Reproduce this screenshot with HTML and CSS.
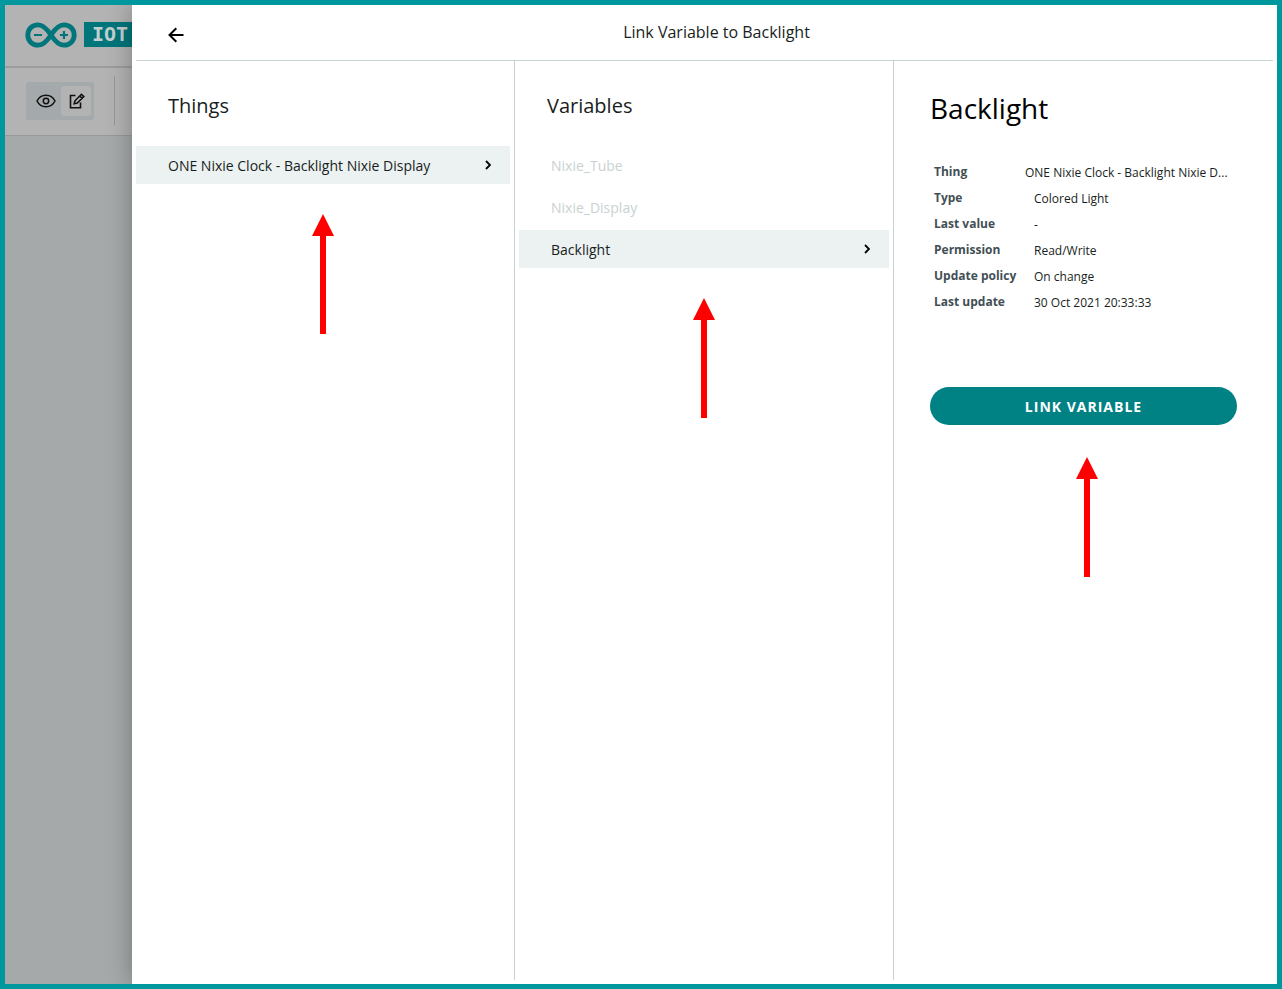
FILE: index.html
```html
<!DOCTYPE html>
<html lang="en">
<head>
<meta charset="utf-8">
<title>Link Variable to Backlight</title>
<link rel="stylesheet" href="styles.css">
</head>
<body>
<div class="frame">
  <div class="backdrop">
    <header class="topbar">
      <svg class="logo" width="52" height="26" viewBox="0 0 52 26" fill="none" stroke="#00767b" aria-hidden="true">
        <path stroke-width="4.8" d="M26 13C22.500 7.500 18.500 2.800 13 2.800C7 2.800 2.800 7.300 2.800 13S7 23.200 13 23.200C18.500 23.200 22.500 18.500 26 13C29.500 7.500 33.500 2.800 39 2.800C45 2.800 49.200 7.300 49.200 13S45 23.200 39 23.200C33.500 23.200 29.500 18.500 26 13Z"/>
        <path stroke-width="2.200" d="M9 13h8M35 13h8M39 9v8"/>
      </svg>
      <span class="product">IOT</span>
    </header>
    <div class="toolbar">
      <div class="modes">
        <button class="mode" aria-label="View">
          <svg width="20" height="14" viewBox="0 0 20 14" fill="none" stroke="#111" stroke-width="1.5"><path d="M1 7C3 3 6.200 1.200 10 1.200S17 3 19 7C17 11 13.800 12.800 10 12.800S3 11 1 7Z"/><circle cx="10" cy="7" r="2.700"/></svg>
        </button>
        <button class="mode mode-active" aria-label="Edit">
          <svg width="16" height="16" viewBox="0 0 16 16" fill="none" stroke="#111" stroke-width="1.600"><path d="M6.500 2.500H1.500V14.800H11.500V9.500"/><path d="M5.200 10.800L6 7.800L12.400 1.300L14.800 3.600L8.300 10.100ZM10.700 3L13.100 5.300"/></svg>
        </button>
      </div>
      <div class="divider"></div>
    </div>
  </div>
  <main class="panel">
    <header class="panel-head">
      <button class="back" aria-label="Back">
        <svg width="16" height="16" viewBox="0 0 16 16" fill="none" stroke="#000" stroke-width="2"><path d="M15.500 8H2M8.300 1.200L1.500 8L8.300 14.800"/></svg>
      </button>
      <h1 class="title">Link Variable to Backlight</h1>
    </header>
    <div class="columns">
      <section class="column">
        <h2 class="heading">Things</h2>
        <div class="list">
          <button class="row row-selected">ONE Nixie Clock - Backlight Nixie Display
            <svg class="chevron" width="6" height="10" viewBox="0 0 6 10" fill="none" stroke="#000" stroke-width="1.800"><path d="M1 1L5 5L1 9"/></svg>
          </button>
        </div>
        <svg class="arrow" width="22" height="120" viewBox="0 0 22 120" fill="#f00" aria-hidden="true"><path d="M11 0L22 22H14V120H8V22H0Z"/></svg>
      </section>
      <section class="column column-mid">
        <h2 class="heading">Variables</h2>
        <div class="list">
          <button class="row" disabled>Nixie_Tube</button>
          <button class="row" disabled>Nixie_Display</button>
          <button class="row row-selected">Backlight
            <svg class="chevron" width="6" height="10" viewBox="0 0 6 10" fill="none" stroke="#000" stroke-width="1.800"><path d="M1 1L5 5L1 9"/></svg>
          </button>
        </div>
        <svg class="arrow" width="22" height="120" viewBox="0 0 22 120" fill="#f00" aria-hidden="true"><path d="M11 0L22 22H14V120H8V22H0Z"/></svg>
      </section>
      <section class="column details">
        <h2 class="name">Backlight</h2>
        <dl class="facts">
          <div class="fact fact-wide"><dt>Thing</dt><dd>ONE Nixie Clock - Backlight Nixie D...</dd></div>
          <div class="fact"><dt>Type</dt><dd>Colored Light</dd></div>
          <div class="fact"><dt>Last value</dt><dd>-</dd></div>
          <div class="fact"><dt>Permission</dt><dd>Read/Write</dd></div>
          <div class="fact"><dt>Update policy</dt><dd>On change</dd></div>
          <div class="fact"><dt>Last update</dt><dd>30 Oct 2021 20:33:33</dd></div>
        </dl>
        <button class="link">LINK VARIABLE</button>
        <svg class="arrow arrow-link" width="22" height="120" viewBox="0 0 22 120" fill="#f00" aria-hidden="true"><path d="M11 0L22 22H14V120H8V22H0Z"/></svg>
      </section>
    </div>
  </main>
</div>
</body>
</html>
```
FILE: styles.css
```css
* { box-sizing: border-box; }
body { margin: 0; font-family: "Open Sans", sans-serif; color: #171e21; }
h1, h2, dl, dd { margin: 0; font-weight: 400; }
button { border: 0; padding: 0; background: none; font: inherit; color: inherit; }
svg { display: block; flex: none; }

.frame { display: flex; min-height: 100vh; border: 5px solid #00979d; background: #a5a9a9; }
.backdrop { flex: none; width: 127px; overflow: hidden; }
.topbar { display: flex; align-items: center; gap: 7px; height: 63px; padding: 0 0 2px 20px; background: #b3b3b3; border-bottom: 2px solid #9b9d9e; }
.product { flex: none; width: 80px; padding-left: 8px; background: #00767b; color: #c3cfcf; font: bold 20px/25px "DejaVu Sans Mono", monospace; }
.toolbar { display: flex; align-items: center; gap: 20px; height: 68px; padding: 0 0 2px 21px; background: #b3b3b3; border-bottom: 1px solid #979a9b; }
.modes { display: flex; flex: none; width: 68px; height: 38px; padding: 4px 3px; border-radius: 3px; background: #a4a9ab; }
.mode { display: flex; flex: 1; align-items: center; justify-content: center; border-radius: 3px; }
.mode:first-child { padding-left: 3px; }
.mode-active { padding-left: 2px; background: #b3b3b3; }
.divider { width: 1px; height: 49px; background: #95999a; }

.panel { position: relative; display: flex; flex: 1; flex-direction: column; min-width: 0; padding: 0 4px 4px; background: #fff; box-shadow: 0 0 24px rgba(0, 0, 0, .3); clip-path: inset(0 0 0 -60px); }
.panel-head { display: grid; grid-template-columns: 80px 1fr 56px; height: 56px; border-bottom: 1px solid #c9d2d2; }
.back { display: flex; align-items: center; padding: 4px 0 0 32px; }
.title { font-size: 16px; line-height: 55px; text-align: center; }
.columns { display: grid; flex: 1; grid-template-columns: repeat(3, 1fr); }
.column { display: flex; flex-direction: column; min-width: 0; padding-right: 4px; border-right: 1px solid #c9d2d2; }
.column-mid { padding-left: 4px; }
.heading { padding-left: 32px; margin: 31px 0 26px; font-size: 20px; line-height: 28px; }
.column-mid .heading { padding-left: 28px; }
.list { display: grid; gap: 4px; }
.row { display: flex; align-items: center; justify-content: space-between; height: 38px; padding: 0 19px 0 32px; font-size: 14px; text-align: left; color: #171e21; }
.row:disabled { color: #c9d2d2; }
.row-selected { background: #ecf1f1; }
.arrow { align-self: center; margin-top: 30px; }

.details { padding: 0 36px; border-right: 0; }
.name { margin: 27px 0 32px; font-size: 28px; line-height: 40px; color: #000; }
.facts { padding: 0 4px; font-size: 12px; line-height: 26px; }
.fact { display: grid; grid-template-columns: 100px 1fr; height: 26px; }
.fact-wide { grid-template-columns: 91px 1fr; }
.fact dt { font-weight: 700; line-height: 24px; color: #434f54; }
.fact dd { white-space: nowrap; }
.link { height: 38px; margin-top: 71px; border-radius: 19px; background: #008184; color: #fff; font-size: 14px; font-weight: 700; letter-spacing: 1px; }
.arrow-link { margin: 32px 0 0 7px; }
```
